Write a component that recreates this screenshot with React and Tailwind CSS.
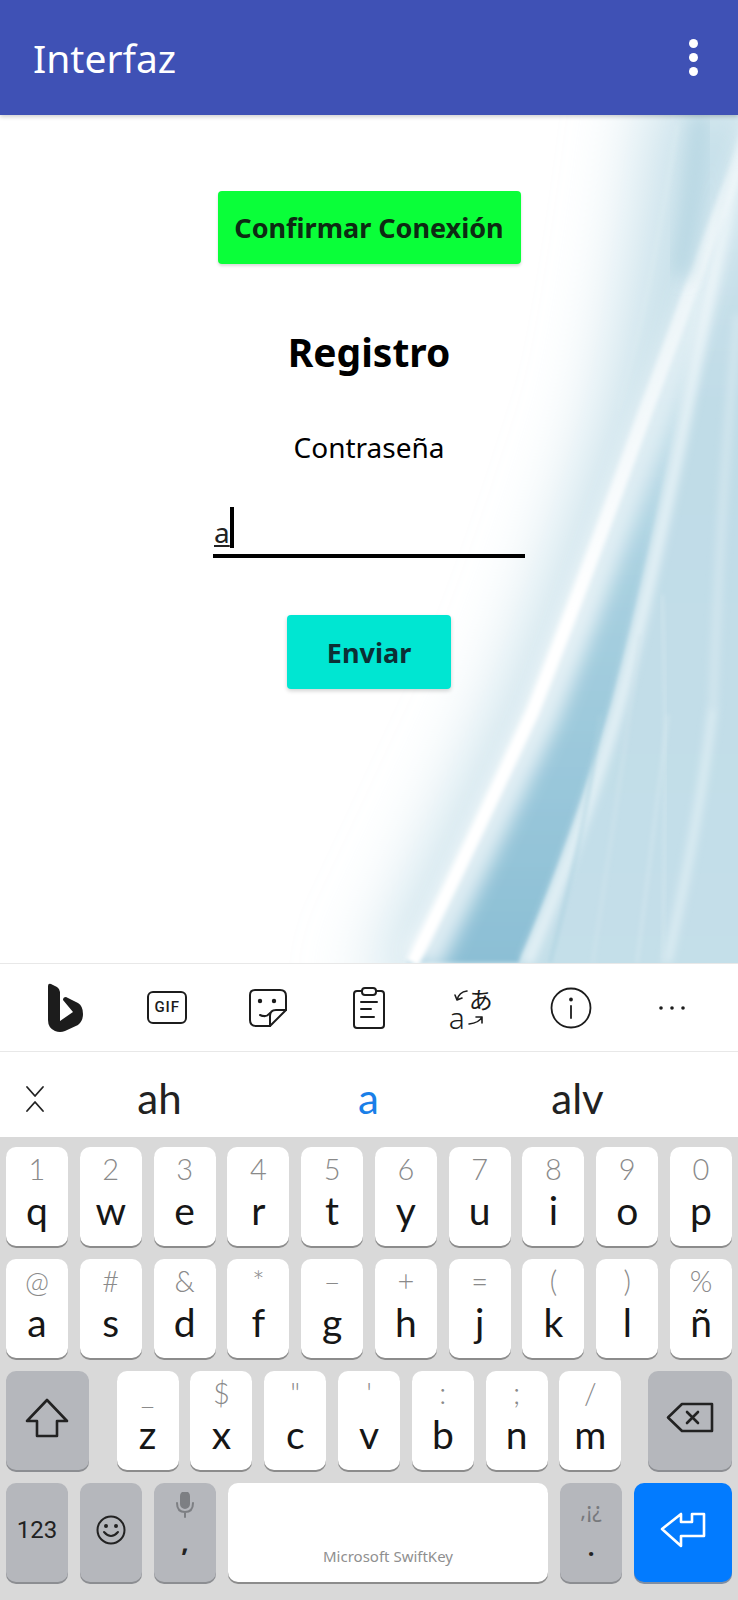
import React from 'react';

const row1 = [['1', 'q'], ['2', 'w'], ['3', 'e'], ['4', 'r'], ['5', 't'], ['6', 'y'], ['7', 'u'], ['8', 'i'], ['9', 'o'], ['0', 'p']];
const row2 = [['@', 'a'], ['#', 's'], ['&', 'd'], ['*', 'f'], ['–', 'g'], ['+', 'h'], ['=', 'j'], ['(', 'k'], [')', 'l'], ['%', 'ñ']];
const row3 = [['_', 'z'], ['$', 'x'], ['"', 'c'], ["'", 'v'], [':', 'b'], [';', 'n'], ['/', 'm']];

const Key = ({ top, main }) => (
  <div className="flex h-[99px] w-[62px] flex-col items-center rounded-[10px] bg-white shadow-[0_2px_0_#8c8c8c] [font-family:Lato,sans-serif]">
    <span className="mt-[4px] h-[36px] text-[29px] leading-[36px] font-light text-[#8a8a8a]">{top}</span>
    <span className="text-[39px] leading-[47px] text-[#161616]">{main}</span>
  </div>
);

const GreyKey = ({ className, children }) => (
  <div className={`flex h-[99px] flex-col items-center justify-center rounded-[10px] bg-[#b5b7bc] pb-[6px] shadow-[0_2px_0_#8c8e92] ${className}`}>
    {children}
  </div>
);

const streakOne = 'M407 848 C450 765 500 655 527 598 C563 507 597 417 643 290 C680 193 713 93 745 20';
const bandEdge = 'M520 848 C553 772 590 670 613 588 C633 513 650 440 677 310 C695 220 715 110 745 0';

const Waves = () => (
  <svg className="absolute inset-0 h-full w-full" viewBox="0 0 738 848" preserveAspectRatio="none">
    <defs>
      <filter id="b40" x="-50%" y="-20%" width="200%" height="140%"><feGaussianBlur stdDeviation="38" /></filter>
      <filter id="b10" x="-50%" y="-20%" width="200%" height="140%"><feGaussianBlur stdDeviation="9" /></filter>
      <filter id="b4" x="-50%" y="-20%" width="200%" height="140%"><feGaussianBlur stdDeviation="4" /></filter>
      <filter id="b2" x="-50%" y="-20%" width="200%" height="140%"><feGaussianBlur stdDeviation="2" /></filter>
      <linearGradient id="band" gradientUnits="userSpaceOnUse" x1="0" y1="150" x2="0" y2="848">
        <stop offset="0" stopColor="#d4e8ef" />
        <stop offset="0.45" stopColor="#a8d0e0" />
        <stop offset="1" stopColor="#8cbfd5" />
      </linearGradient>
      <linearGradient id="sheet" gradientUnits="userSpaceOnUse" x1="0" y1="0" x2="0" y2="848">
        <stop offset="0" stopColor="#d0e5ed" />
        <stop offset="0.35" stopColor="#c0dce7" />
        <stop offset="1" stopColor="#c4dfe9" />
      </linearGradient>
      <linearGradient id="fadeUp" gradientUnits="userSpaceOnUse" x1="0" y1="20" x2="0" y2="500">
        <stop offset="0" stopColor="#ffffff" stopOpacity="0.2" />
        <stop offset="0.6" stopColor="#ffffff" stopOpacity="0.7" />
        <stop offset="1" stopColor="#ffffff" stopOpacity="1" />
      </linearGradient>
    </defs>
    <rect width="738" height="848" fill="#ffffff" />
    {/* pale haze that fades into the white page */}
    <path d="M365 880 C420 765 470 655 497 598 C535 507 565 417 605 290 C625 190 640 90 655 -40 L780 -40 L780 880 Z" fill="#c5dfe9" filter="url(#b40)" />
    {/* darker fold between the two bright edges */}
    <path d={`${streakOne} L745 0 C715 110 695 220 677 310 C650 440 633 513 613 588 C590 670 553 772 520 848 Z`} fill="url(#band)" filter="url(#b2)" />
    {/* right side sheet */}
    <path d={`${bandEdge} L745 860 L520 860 Z`} fill="url(#sheet)" filter="url(#b2)" />
    {/* bright streaks */}
    <path d={bandEdge} transform="translate(7 0)" fill="none" stroke="#e2f0f5" strokeWidth="12" filter="url(#b4)" />
    <path d={streakOne} transform="translate(14 0)" fill="none" stroke="url(#fadeUp)" strokeWidth="38" strokeOpacity="0.7" filter="url(#b10)" />
    <path d={streakOne} transform="translate(5 0)" fill="none" stroke="url(#fadeUp)" strokeWidth="14" filter="url(#b2)" />
    {/* thin veils on the sheet */}
    <path d="M713 592 C700 700 680 790 667 848" fill="none" stroke="#e0eff4" strokeWidth="7" filter="url(#b4)" />
    <path d="M662 480 C668 620 664 740 663 848" fill="none" stroke="#d4e7ee" strokeWidth="2" filter="url(#b2)" />
    <path d="M668 600 C655 700 645 780 637 848" fill="none" stroke="#d4e7ee" strokeWidth="2" filter="url(#b2)" />
    <path d="M640 520 C625 640 605 760 593 848" fill="none" stroke="#d0e4ec" strokeWidth="2" filter="url(#b2)" />
    <path d="M738 200 C725 330 718 460 713 592" fill="none" stroke="#d8e9f0" strokeWidth="6" filter="url(#b4)" />
    {/* soft blue strip and thin line in the upper haze */}
    <path d="M700 0 C695 60 690 110 680 160" fill="none" stroke="#b6d6e2" strokeWidth="16" filter="url(#b10)" />
    <path d="M677 10 C665 90 645 200 618 295" fill="none" stroke="#dcecf1" strokeWidth="2" filter="url(#b2)" />
    {/* thin line inside the dark fold */}
    <path d="M550 848 C570 770 590 690 600 600" fill="none" stroke="#a9d0df" strokeWidth="2" filter="url(#b2)" />
  </svg>
);

const Toolbar = () => (
  <div className="grid h-[89px] shrink-0 grid-cols-7 items-center border-t border-b border-[#e8e8e8] bg-white px-[16px] text-[#1c1c1c]">
    <div className="flex justify-center">
      <svg width="36" height="50" viewBox="0 0 36 50">
        <path d="M0 3 Q0 0 3 1 L9 4 Q12 6 12 9 V38 L25 29 L15 17 Q15 14 18 14 L30 20 Q35 23 35 31 Q35 38 30 42 L17 48 Q12 50 7 48 Q0 45 0 37 Z" fill="#1c1c1c" />
      </svg>
    </div>
    <div className="flex justify-center">
      <div className="flex h-[33px] w-[40px] items-center justify-center rounded-[6px] border-2 border-[#1c1c1c] text-[15px] font-medium tracking-[1px] [font-family:Roboto,sans-serif]">GIF</div>
    </div>
    <div className="flex justify-center">
      <svg width="38" height="38" viewBox="0 0 38 38" fill="none" stroke="#1c1c1c" strokeWidth="2" strokeLinecap="round" strokeLinejoin="round">
        <path d="M6 1 H31 Q37 1 37 7 V21 L21 37 H7 Q1 37 1 31 V6 Q1 1 6 1 Z" />
        <path d="M37 21 H27 Q21 21 21 27 V37" />
        <path d="M11 26 Q17 29 21 24" />
        <circle cx="11" cy="12" r="1.2" fill="#1c1c1c" />
        <circle cx="25" cy="12" r="1.2" fill="#1c1c1c" />
      </svg>
    </div>
    <div className="flex justify-center">
      <svg width="34" height="42" viewBox="0 0 34 42" fill="none" stroke="#1c1c1c" strokeWidth="2" strokeLinecap="round" strokeLinejoin="round">
        <path d="M10 4 H5 Q2 4 2 7 V38 Q2 41 5 41 H29 Q32 41 32 38 V7 Q32 4 29 4 H24" />
        <rect x="10" y="1" width="14" height="7" rx="3" />
        <path d="M9 15 H25 M9 22 H19 M9 30 H22" />
      </svg>
    </div>
    <div className="flex justify-center">
      <div className="relative h-[40px] w-[42px] text-[#1c1c1c]">
        <span className="absolute top-[-3px] right-[-2px] text-[24px] leading-[28px] [font-family:'Noto_Sans_CJK_JP',sans-serif]">あ</span>
        <span className="absolute bottom-[-5px] left-0 text-[30px] leading-[30px] font-light">a</span>
        <svg className="absolute inset-0" width="42" height="40" viewBox="0 0 42 40" fill="none" stroke="#1c1c1c" strokeWidth="1.6" strokeLinecap="round" strokeLinejoin="round">
          <path d="M18 3 Q10 4 8 12 M6 7 L8 12 L13 10" />
          <path d="M20 36 Q30 35 33 29 M27 29 L33 29 L33 35" />
        </svg>
      </div>
    </div>
    <div className="flex justify-center">
      <svg width="42" height="42" viewBox="0 0 42 42" fill="none" stroke="#1c1c1c" strokeWidth="1.8" strokeLinecap="round">
        <circle cx="21" cy="21" r="19.5" />
        <path d="M21 19 V31" />
        <circle cx="21" cy="12.5" r="1" fill="#1c1c1c" />
      </svg>
    </div>
    <div className="flex justify-center">
      <svg width="28" height="6" viewBox="0 0 28 6" fill="#1c1c1c">
        <circle cx="3" cy="3" r="1.8" />
        <circle cx="14" cy="3" r="1.8" />
        <circle cx="25" cy="3" r="1.8" />
      </svg>
    </div>
  </div>
);

const Suggestions = () => (
  <div className="flex h-[85px] shrink-0 items-center bg-white pt-[8px] text-[42px] text-[#222222] [font-family:Lato,sans-serif]">
    <div className="flex w-[55px] justify-center pl-[14px]">
      <svg width="20" height="28" viewBox="0 0 20 28" fill="none" stroke="#222222" strokeWidth="1.8" strokeLinecap="round" strokeLinejoin="round">
        <path d="M2 2 L10 11 L18 2" />
        <path d="M2 26 L10 17 L18 26" />
      </svg>
    </div>
    <div className="w-[209px] text-center">ah</div>
    <div className="w-[209px] text-center text-[#1a7fe8]">a</div>
    <div className="w-[209px] text-center">alv</div>
  </div>
);

const Keyboard = () => (
  <div className="flex flex-1 flex-col gap-[13px] bg-[#d9d9d9] px-[6px] pt-[10px]">
    <div className="grid grid-cols-10 gap-x-[11.8px]">
      {row1.map(([top, main]) => <Key key={main} top={top} main={main} />)}
    </div>
    <div className="grid grid-cols-10 gap-x-[11.8px]">
      {row2.map(([top, main]) => <Key key={main} top={top} main={main} />)}
    </div>
    <div className="flex">
      <GreyKey className="mr-[28px] w-[83px]">
        <svg width="44" height="40" viewBox="0 0 44 40" fill="none" stroke="#222222" strokeWidth="2.6" strokeLinejoin="round">
          <path d="M22 2 L42 23 H32 V38 H12 V23 H2 Z" />
        </svg>
      </GreyKey>
      <div className="flex gap-x-[11.8px]">
        {row3.map(([top, main]) => <Key key={main} top={top} main={main} />)}
      </div>
      <GreyKey className="ml-[27px] w-[84px]">
        <svg width="48" height="31" viewBox="0 0 48 31" fill="none" stroke="#222222" strokeWidth="2.6" strokeLinejoin="round" strokeLinecap="round">
          <path d="M2 15.5 L16 2 H46 V29 H16 Z" />
          <path d="M21 10 L32 21 M32 10 L21 21" />
        </svg>
      </GreyKey>
    </div>
    <div className="flex gap-x-[12px]">
      <GreyKey className="w-[62px] text-[24px] text-[#222222] [font-family:Roboto,sans-serif]">123</GreyKey>
      <GreyKey className="w-[62px]">
        <svg width="30" height="30" viewBox="0 0 30 30" fill="none" stroke="#222222" strokeWidth="2" strokeLinecap="round">
          <circle cx="15" cy="15" r="13.5" />
          <path d="M8 17 Q15 25 22 17" />
          <circle cx="10" cy="11" r="1" fill="#222222" />
          <circle cx="20" cy="11" r="1" fill="#222222" />
        </svg>
      </GreyKey>
      <GreyKey className="w-[62px] !justify-start">
        <svg className="mt-[9px]" width="18" height="26" viewBox="0 0 18 26" fill="none" stroke="#7d7f83" strokeWidth="2" strokeLinecap="round">
          <rect x="5" y="0" width="8" height="16" rx="4" fill="#7d7f83" />
          <path d="M1 11 Q1 20 9 20 Q17 20 17 11 M9 20 V25" />
        </svg>
        <span className="mt-[6px] text-[26px] leading-[36px] font-bold text-[#222222]">,</span>
      </GreyKey>
      <div className="relative h-[99px] w-[320px] rounded-[10px] bg-white shadow-[0_2px_0_#8c8c8c]">
        <span className="absolute inset-x-0 bottom-[16px] text-center text-[15px] leading-[20px] text-[#8f8f8f]">Microsoft SwiftKey</span>
      </div>
      <GreyKey className="w-[62px] !justify-start">
        <span className="mt-[10px] text-[22px] leading-[32px] text-[#77797d]">,¡¿</span>
        <span className="mt-[7px] text-[24px] leading-[30px] font-bold text-[#222222]">.</span>
      </GreyKey>
      <div className="flex h-[99px] w-[98px] items-center justify-center rounded-[10px] bg-[#027bff] pb-[6px] shadow-[0_2px_0_#7f8ea3]">
        <svg width="46" height="36" viewBox="0 0 46 36" fill="none" stroke="#ffffff" strokeWidth="2.6" strokeLinejoin="round">
          <path d="M2 17 L21 2 V10 H32 V2 H44 V24 H21 V34 Z" />
        </svg>
      </div>
    </div>
  </div>
);

export default function App() {
  return (
    <div className="flex h-[1600px] w-[738px] flex-col overflow-hidden bg-white [font-family:'Noto_Sans',sans-serif]">
      <header className="relative z-10 flex h-[115px] shrink-0 items-center justify-between bg-[#3f51b5] pr-[40px] pl-[33px] shadow-[0_2px_4px_rgba(0,0,0,0.18)]">
        <h1 className="text-[39px] leading-[46px] text-white">Interfaz</h1>
        <div className="flex flex-col gap-[5px]">
          <span className="h-[9px] w-[9px] rounded-full bg-white" />
          <span className="h-[9px] w-[9px] rounded-full bg-white" />
          <span className="h-[9px] w-[9px] rounded-full bg-white" />
        </div>
      </header>

      <main className="relative h-[848px] shrink-0 overflow-hidden">
        <Waves />
        <div className="relative flex flex-col items-center pt-[76px]">
          <button className="flex h-[73px] w-[303px] items-center justify-center rounded-[4px] bg-[#0aff39] pt-[2px] text-[27px] font-bold text-[#0d2a12] shadow-[0_2px_3px_rgba(0,0,0,0.15)]">
            Confirmar Conexión
          </button>
          <h2 className="mt-[61px] text-[39px] leading-[54px] font-bold text-black">Registro</h2>
          <p className="mt-[49px] text-[28px] leading-[38px] text-black">Contraseña</p>
          <div className="mt-[41px] flex h-[51px] w-[312px] items-start border-b-4 border-black text-[28px] text-[#222222]">
            <span className="mt-[6px] ml-[1px] leading-[38px] underline">a</span>
            <span className="h-[41px] w-[4px] bg-black" />
          </div>
          <button className="mt-[57px] flex h-[74px] w-[164px] items-center justify-center rounded-[4px] bg-[#00e6d2] pt-[2px] text-[27px] font-bold text-[#0c2f35] shadow-[0_2px_4px_rgba(0,0,0,0.18)]">
            Enviar
          </button>
        </div>
      </main>

      <Toolbar />
      <Suggestions />
      <Keyboard />
    </div>
  );
}
